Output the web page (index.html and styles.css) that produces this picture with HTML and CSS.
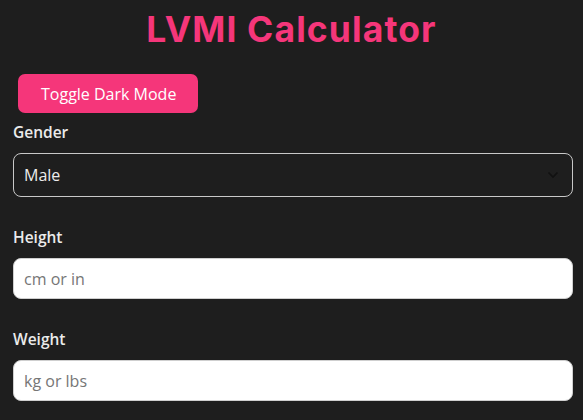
FILE: index.html
```html
<!DOCTYPE html>
<html lang="en">
<head>
<meta charset="utf-8">
<title>LVMI Calculator</title>
<link rel="stylesheet" href="styles.css">
</head>
<body>
<div class="app">
  <h1 class="title">LVMI Calculator</h1>
  <button class="toggle" type="button">Toggle Dark Mode</button>
  <div class="group">
    <label class="label" for="gender">Gender</label>
    <select id="gender" class="select">
      <option>Male</option>
      <option>Female</option>
    </select>
  </div>
  <div class="group">
    <label class="label" for="height">Height</label>
    <input id="height" class="input" type="text" placeholder="cm or in">
  </div>
  <div class="group">
    <label class="label" for="weight">Weight</label>
    <input id="weight" class="input" type="text" placeholder="kg or lbs">
  </div>
</div>
</body>
</html>
```
FILE: styles.css
```css
html, body {
  margin: 0;
  padding: 0;
  background: #1e1e1e;
}
.app {
  padding: 10px 10px 0 13px;
  font-family: "Open Sans", "Noto Sans", sans-serif;
  color: #e8e8e8;
}
.title {
  margin: 0 -10px 0 -13px;
  text-align: center;
  font-family: Inter, "Noto Sans", sans-serif;
  font-weight: 700;
  font-size: 35.5px;
  line-height: 40px;
  letter-spacing: 1.1px;
  color: #f5367a;
}
.toggle {
  display: block;
  margin: 24px 0 9px 5px;
  height: 39px;
  padding: 0 22px 0 23px;
  border: none;
  border-radius: 7px;
  background: #f5367a;
  color: #ffffff;
  font-family: "Open Sans", "Noto Sans", sans-serif;
  font-size: 16px;
}
.group {
  margin-bottom: 30px;
}
.group:last-child {
  margin-bottom: 0;
}
.label {
  display: block;
  font-weight: 600;
  font-size: 15.5px;
  line-height: 20px;
  margin-bottom: 11px;
  color: #ebebeb;
}
.select {
  display: block;
  width: 100%;
  height: 44px;
  box-sizing: border-box;
  appearance: none;
  -webkit-appearance: none;
  background-color: #1e1e1e;
  background-image: url("data:image/svg+xml,%3Csvg xmlns='http://www.w3.org/2000/svg' width='12' height='8' viewBox='0 0 12 8'%3E%3Cpath d='M1.5 1.5 L6 6 L10.5 1.5' fill='none' stroke='%23111' stroke-width='1.6'/%3E%3C/svg%3E");
  background-repeat: no-repeat;
  background-position: right 13px center;
  border: 1px solid #c8c8c8;
  border-radius: 8px;
  color: #ececec;
  font-family: "Open Sans", "Noto Sans", sans-serif;
  font-size: 16px;
  padding: 0 30px 0 10px;
}
.input {
  display: block;
  width: 100%;
  height: 41px;
  box-sizing: border-box;
  background: #ffffff;
  border: 1px solid #cfcfcf;
  border-radius: 8px;
  font-family: "Open Sans", "Noto Sans", sans-serif;
  font-size: 16px;
  padding: 0 10px;
  color: #222;
}
.input::placeholder {
  color: #767676;
}
```
